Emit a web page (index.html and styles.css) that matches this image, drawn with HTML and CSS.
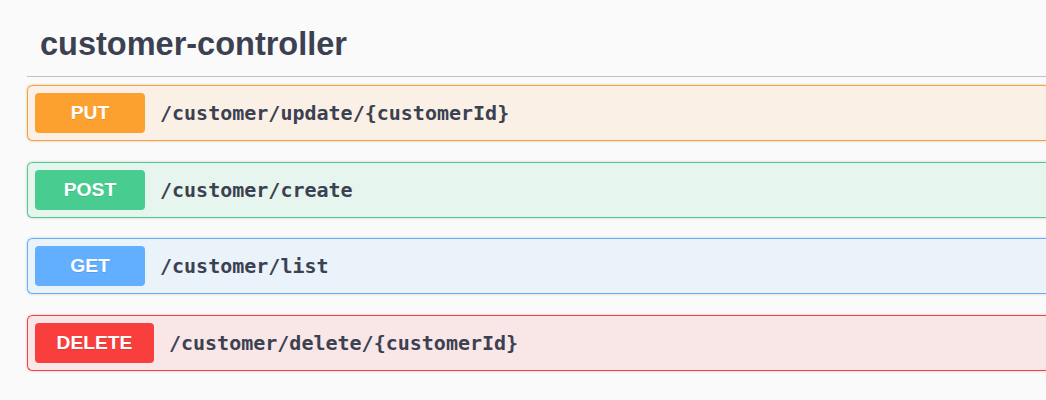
FILE: index.html
```html
<!DOCTYPE html>
<html lang="en">
<head>
<meta charset="utf-8">
<title>customer-controller</title>
<link rel="stylesheet" href="styles.css">
</head>
<body>
<div class="tag-section">
  <h3 class="tag-title">customer-controller</h3>
  <div class="opblock opblock-put">
    <span class="method">PUT</span>
    <span class="path">/customer/update/{customerId}</span>
  </div>
  <div class="opblock opblock-post">
    <span class="method">POST</span>
    <span class="path">/customer/create</span>
  </div>
  <div class="opblock opblock-get">
    <span class="method">GET</span>
    <span class="path">/customer/list</span>
  </div>
  <div class="opblock opblock-delete">
    <span class="method">DELETE</span>
    <span class="path">/customer/delete/{customerId}</span>
  </div>
</div>
</body>
</html>
```

FILE: styles.css
```css
html, body {
  margin: 0;
  padding: 0;
  background: #fafafa;
  overflow: hidden;
}

body {
  width: 1046px;
  height: 400px;
  font-family: "Liberation Sans", Arial, sans-serif;
  color: #3b4151;
}

.tag-section {
  margin-left: 27px;
  padding-top: 10px;
}

.tag-title {
  margin: 0 0 8px 0;
  padding: 14px 20px 12px 13px;
  font-size: 32.5px;
  line-height: 40px;
  font-weight: 700;
  color: #3b4151;
  border-bottom: 1px solid rgba(59, 65, 81, 0.3);
}

.opblock {
  display: flex;
  align-items: center;
  box-sizing: border-box;
  height: 56px;
  padding: 0 7px;
  margin-bottom: 20.67px;
  border: 1px solid;
  border-right: 0;
  border-radius: 5.5px 0 0 5.5px;
  box-shadow: 0 0 3px rgba(0, 0, 0, 0.19);
}

.method {
  box-sizing: border-box;
  min-width: 110px;
  height: 40px;
  padding: 0 21.5px;
  line-height: 40px;
  border-radius: 4px;
  text-align: center;
  font-family: "Liberation Sans", Arial, sans-serif;
  font-size: 19.25px;
  font-weight: 700;
  color: #fff;
  text-shadow: 0 1px 0 rgba(0, 0, 0, 0.1);
}

.path {
  padding-left: 15px;
  font-family: "DejaVu Sans Mono", monospace;
  font-size: 20px;
  font-weight: 700;
  color: #3b4151;
}

.opblock-put {
  border-color: #fca130;
  background: rgba(252, 161, 48, 0.1);
}
.opblock-put .method { background: #fca130; }

.opblock-post {
  border-color: #49cc90;
  background: rgba(73, 204, 144, 0.1);
}
.opblock-post .method { background: #49cc90; }

.opblock-get {
  border-color: #61affe;
  background: rgba(97, 175, 254, 0.1);
}
.opblock-get .method { background: #61affe; }

.opblock-delete {
  border-color: #f93e3e;
  background: rgba(249, 62, 62, 0.1);
}
.opblock-delete .method { background: #f93e3e; }
```
